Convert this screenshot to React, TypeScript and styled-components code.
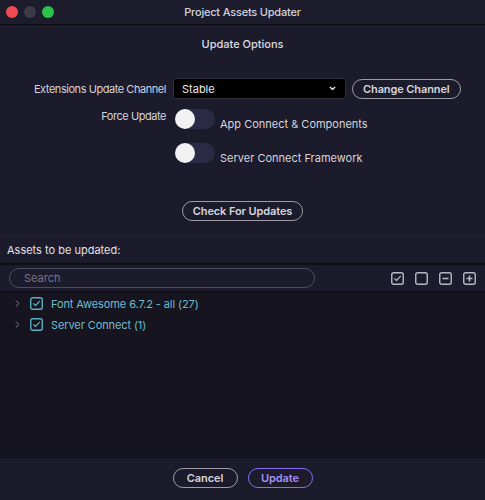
import styled, { createGlobalStyle } from 'styled-components';

const GlobalStyle = createGlobalStyle`
  * {
    box-sizing: border-box;
  }

  body {
    margin: 0;
    background: #1c1b2b;
    font-family: Inter, 'Liberation Sans', sans-serif;
    font-size: 11px;
    color: #d9d8df;
  }
`;

const Window = styled.div`
  display: flex;
  flex-direction: column;
  width: 485px;
  height: 500px;
  background: #1c1b2b;
  overflow: hidden;
`;

const TitleBar = styled.header`
  display: grid;
  grid-template-columns: 1fr auto 1fr;
  align-items: center;
  height: 25px;
  padding: 0 6px;
  background: #1d1c2c;
  border-bottom: 1px solid #0e0d16;
`;

const Lights = styled.div`
  display: flex;
  gap: 6px;
`;

const Light = styled.span<{ color: string }>`
  width: 12px;
  height: 12px;
  border-radius: 50%;
  background: ${(props) => props.color};
`;

const Title = styled.h1`
  margin: 0;
  font-size: 11px;
  font-weight: 500;
  letter-spacing: -0.2px;
  color: #d3d2da;
`;

const Options = styled.section`
  display: flex;
  flex-direction: column;
  padding: 12px 0 0;
`;

const Heading = styled.h2`
  margin: 0 0 27px;
  text-align: center;
  font-size: 11px;
  font-weight: 500;
  line-height: 14px;
  color: #dddce3;
`;

const FormGrid = styled.div`
  display: grid;
  grid-template-columns: 166px 1fr;
  column-gap: 7px;
  row-gap: 10px;
`;

const Label = styled.label`
  text-align: right;
  font-size: 11px;
  letter-spacing: -0.45px;
  line-height: 14px;
  color: #d3d2da;
  white-space: nowrap;
`;

const ChannelLabel = styled(Label)`
  align-self: center;
`;

const Row = styled.div`
  display: flex;
  align-items: center;
  gap: 6px;
`;

const Select = styled.div`
  display: flex;
  align-items: center;
  justify-content: space-between;
  width: 173px;
  height: 21px;
  padding: 0 8px;
  background: #000;
  border: 1px solid #2f2e3c;
  border-radius: 3px;
  color: #ececf0;
  font-size: 11px;
`;

const PillButton = styled.button<{ $accent?: boolean }>`
  height: 20px;
  padding: 0 10px;
  background: transparent;
  border: 1.5px solid ${(props) => (props.$accent ? '#8a6cf2' : '#9e9da6')};
  border-radius: 10px;
  color: ${(props) => (props.$accent ? '#a68ff8' : '#d6d5dc')};
  font-family: inherit;
  font-size: 11px;
  font-weight: 600;
  letter-spacing: -0.1px;
  line-height: 16px;
  white-space: nowrap;
`;

const Toggles = styled.div`
  display: flex;
  flex-direction: column;
  gap: 12px;
  padding-left: 2px;
`;

const ToggleRow = styled.div`
  display: flex;
  align-items: flex-start;
  gap: 5px;
`;

const Track = styled.span`
  position: relative;
  width: 40px;
  height: 20px;
  border-radius: 10px;
  background: #2c2944;
`;

const Knob = styled.span`
  position: absolute;
  left: 0;
  top: 0;
  width: 20px;
  height: 20px;
  border-radius: 50%;
  background: #f1f0f3;
`;

const ToggleText = styled.span`
  margin-top: 8px;
  font-size: 11px;
  line-height: 14px;
  color: #d6d5dc;
`;

const CheckRow = styled.div`
  display: flex;
  justify-content: center;
  padding: 36px 0 14px;
  border-bottom: 1px solid #24233a;
`;

const SectionHeader = styled.div`
  height: 29px;
  padding: 0 7px;
  display: flex;
  align-items: center;
  font-size: 11px;
  color: #e2e1e7;
  border-bottom: 2px solid #0f0e17;
`;

const Toolbar = styled.div`
  display: flex;
  align-items: center;
  height: 28px;
  padding: 0 9px;
  gap: 11px;
  border-bottom: 2px solid #0f0e17;
`;

const Search = styled.input`
  width: 306px;
  height: 20px;
  padding: 0 14px;
  background: transparent;
  border: 1px solid #4d4b60;
  border-radius: 10px;
  color: #ddd;
  font-family: inherit;
  font-size: 11px;

  &::placeholder {
    color: #76748a;
  }
`;

const ToolIcons = styled.div`
  display: flex;
  gap: 11px;
  margin-left: auto;
`;

const IconButton = styled.span`
  display: flex;
  width: 13px;
  height: 13px;
`;

const Tree = styled.ul`
  flex: 1;
  margin: 0;
  padding: 0;
  list-style: none;
  background: #16151f;
`;

const TreeItem = styled.li`
  display: flex;
  align-items: center;
  height: 21px;
  padding-left: 13px;
  gap: 8px;
  color: #6fbbd0;
  font-size: 11px;
  letter-spacing: -0.1px;
`;

const Footer = styled.footer`
  display: flex;
  justify-content: center;
  gap: 10px;
  height: 43px;
  padding-top: 10px;
  border-top: 1px solid #0f0e17;
  background: #1c1b2b;
`;

const FooterButton = styled(PillButton)`
  width: 65px;
  padding: 0;
`;

function Chevron({ down = false }: { down?: boolean }) {
  return (
    <svg width="9" height="9" viewBox="0 0 10 10" fill="none">
      <path
        d={down ? 'M2.5 3.5 5 6l2.5-2.5' : 'M3.5 2 6.5 5l-3 3'}
        stroke={down ? '#e8e8ec' : '#7f7e8c'}
        strokeWidth={down ? 1.5 : 1.1}
        strokeLinecap="round"
        strokeLinejoin="round"
      />
    </svg>
  );
}

function BoxIcon({ kind, color }: { kind: 'check' | 'empty' | 'minus' | 'plus'; color: string }) {
  return (
    <svg width="13" height="13" viewBox="0 0 13 13" fill="none">
      <rect x="0.75" y="0.75" width="11.5" height="11.5" rx="2" stroke={color} strokeWidth="1.4" />
      {kind === 'check' && (
        <path d="M3.6 6.6 5.5 8.5 9.4 4.3" stroke={color} strokeWidth="1.2" strokeLinecap="round" strokeLinejoin="round" />
      )}
      {kind === 'minus' && <path d="M3.5 6.5h6" stroke={color} strokeWidth="1.6" />}
      {kind === 'plus' && <path d="M3.5 6.5h6M6.5 3.5v6" stroke={color} strokeWidth="1.6" />}
    </svg>
  );
}

const assets = [
  { id: 'fa', name: 'Font Awesome 6.7.2 - all (27)' },
  { id: 'sc', name: 'Server Connect (1)' },
];

export default function App() {
  return (
    <>
      <GlobalStyle />
      <Window>
        <TitleBar>
          <Lights>
            <Light color="#ee4b50" />
            <Light color="#3c3b47" />
            <Light color="#2bc24a" />
          </Lights>
          <Title>Project Assets Updater</Title>
          <span />
        </TitleBar>

        <Options>
          <Heading>Update Options</Heading>
          <FormGrid>
            <ChannelLabel>Extensions Update Channel</ChannelLabel>
            <Row>
              <Select>
                Stable
                <Chevron down />
              </Select>
              <PillButton>Change Channel</PillButton>
            </Row>

            <Label>Force Update</Label>
            <Toggles>
              <ToggleRow>
                <Track>
                  <Knob />
                </Track>
                <ToggleText>App Connect &amp; Components</ToggleText>
              </ToggleRow>
              <ToggleRow>
                <Track>
                  <Knob />
                </Track>
                <ToggleText>Server Connect Framework</ToggleText>
              </ToggleRow>
            </Toggles>
          </FormGrid>
          <CheckRow>
            <PillButton>Check For Updates</PillButton>
          </CheckRow>
        </Options>

        <SectionHeader>Assets to be updated:</SectionHeader>
        <Toolbar>
          <Search placeholder="Search" />
          <ToolIcons>
            <IconButton>
              <BoxIcon kind="check" color="#b9b8c2" />
            </IconButton>
            <IconButton>
              <BoxIcon kind="empty" color="#b9b8c2" />
            </IconButton>
            <IconButton>
              <BoxIcon kind="minus" color="#b9b8c2" />
            </IconButton>
            <IconButton>
              <BoxIcon kind="plus" color="#b9b8c2" />
            </IconButton>
          </ToolIcons>
        </Toolbar>

        <Tree>
          {assets.map((asset) => (
            <TreeItem key={asset.id}>
              <Chevron />
              <BoxIcon kind="check" color="#5aaec6" />
              {asset.name}
            </TreeItem>
          ))}
        </Tree>

        <Footer>
          <FooterButton>Cancel</FooterButton>
          <FooterButton $accent>Update</FooterButton>
        </Footer>
      </Window>
    </>
  );
}
